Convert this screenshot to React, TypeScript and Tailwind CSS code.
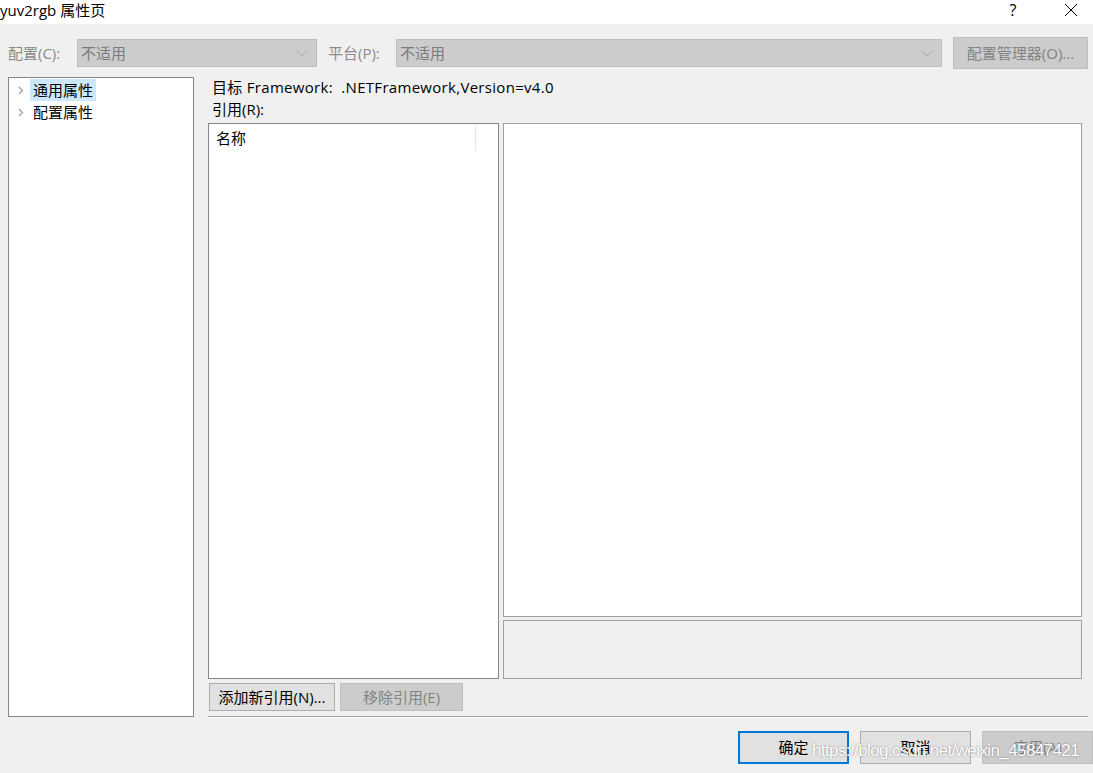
import React from "react";

const font = {
  fontFamily: '"Segoe UI", "Open Sans", "Noto Sans CJK SC", sans-serif',
};

function Chevron() {
  return (
    <svg width="6" height="9" viewBox="0 0 6 9" className="shrink-0">
      <path d="M1 1 L4.5 4.5 L1 8" fill="none" stroke="#a0a0a0" strokeWidth="1.3" />
    </svg>
  );
}

function ComboArrow() {
  return (
    <svg width="12" height="7" viewBox="0 0 12 7">
      <path d="M1 1 L6 6 L11 1" fill="none" stroke="#a8a8a8" strokeWidth="1" />
    </svg>
  );
}

export default function App() {
  return (
    <div
      className="relative w-[1093px] h-[773px] bg-[#f0f0f0] flex flex-col overflow-hidden text-[15px] text-black"
      style={font}
    >
      {/* Title bar */}
      <div className="h-[24px] bg-white flex items-center shrink-0 pb-[4px]">
        <span className="leading-[20px]">yuv2rgb 属性页</span>
        <div className="ml-auto flex items-center">
          <span className="w-[14px] text-center text-[16px] leading-[20px]">?</span>
          <svg width="14" height="14" viewBox="0 0 14 14" className="ml-[44px] mr-[15px]">
            <path d="M1 1 L13 13 M13 1 L1 13" stroke="#000" strokeWidth="1" />
          </svg>
        </div>
      </div>

      {/* Config row */}
      <div className="flex items-center h-[32px] mt-[13px] pl-[8px] shrink-0">
        <span className="w-[69px] text-[#8a8a8a]">配置(C):</span>
        <div className="w-[240px] h-[28px] bg-[#cccccc] border border-[#bfbfbf] flex items-center pl-[3px] pr-[8px] text-[#7a7a7a]">
          <span>不适用</span>
          <span className="ml-auto">
            <ComboArrow />
          </span>
        </div>
        <span className="ml-[11px] w-[68px] text-[#8a8a8a]">平台(P):</span>
        <div className="w-[546px] h-[28px] bg-[#cccccc] border border-[#bfbfbf] flex items-center pl-[3px] pr-[8px] text-[#7a7a7a]">
          <span>不适用</span>
          <span className="ml-auto">
            <ComboArrow />
          </span>
        </div>
        <button className="ml-[11px] w-[135px] h-[32px] bg-[#cccccc] border border-[#bfbfbf] text-[#838383]">
          配置管理器(O)...
        </button>
      </div>

      {/* Main */}
      <div className="flex mt-[8px] pl-[8px] shrink-0">
        {/* Tree */}
        <div className="w-[186px] h-[640px] bg-white border border-[#828790] pt-[1px] flex flex-col">
          <div className="flex items-center h-[22px]">
            <span className="w-[21px] flex justify-end pr-[6px]">
              <Chevron />
            </span>
            <span className="bg-[#cce8ff] h-[22px] px-[3px] flex items-center">通用属性</span>
          </div>
          <div className="flex items-center h-[22px]">
            <span className="w-[21px] flex justify-end pr-[6px]">
              <Chevron />
            </span>
            <span className="h-[22px] px-[3px] flex items-center">配置属性</span>
          </div>
        </div>

        {/* Right side */}
        <div className="ml-[14px] w-[880px] flex flex-col">
          <div className="h-[22px] flex items-center mt-[-1px] pl-[4px] tracking-[0.3px]">
            目标 Framework:&nbsp;&nbsp;.NETFramework,Version=v4.0
          </div>
          <div className="h-[22px] flex items-center pl-[4px]">引用(R):</div>
          <div className="flex gap-[4px] mt-[3px]">
            <div className="w-[291px] h-[556px] bg-white border border-[#828790] p-[1px]">
              <div className="flex h-[26px]">
                <div className="w-[266px] border-r border-[#e5e5e5] flex items-center pl-[6px]">名称</div>
              </div>
            </div>
            <div className="w-[579px] flex flex-col gap-[3px]">
              <div className="h-[494px] bg-white border border-[#a0a0a0]" />
              <div className="h-[59px] border border-[#a0a0a0]" />
            </div>
          </div>
          <div className="flex gap-[5px] mt-[4px] pl-[1px]">
            <button className="w-[126px] h-[28px] bg-[#e1e1e1] border border-[#adadad] flex items-center justify-center">
              添加新引用(N)...
            </button>
            <button className="w-[123px] h-[28px] bg-[#cccccc] border border-[#bfbfbf] text-[#838383] flex items-center justify-center">
              移除引用(E)
            </button>
          </div>
          <div className="mt-[5px] h-[2px] border-t border-[#a0a0a0] border-b border-b-white" />
        </div>
      </div>

      {/* Bottom buttons */}
      <div className="flex mt-[13px] pl-[738px] gap-[11px]">
        <button className="w-[111px] h-[33px] bg-[#e1e1e1] border-2 border-[#0078d7] flex items-center justify-center">
          确定
        </button>
        <button className="w-[111px] h-[33px] bg-[#e1e1e1] border border-[#adadad] flex items-center justify-center">
          取消
        </button>
        <button className="w-[111px] h-[33px] bg-[#cccccc] border border-[#bfbfbf] text-[#838383] flex items-center justify-center">
          应用(A)
        </button>
      </div>

      {/* Watermark */}
      <div
        className="absolute left-[812px] top-[740px] text-[17px] leading-[22px] text-white tracking-[-0.6px]"
        style={{
          fontFamily: '"Liberation Sans", Arial, sans-serif',
          textShadow: "0 0 2px rgba(0,0,0,0.45)",
        }}
      >
        https://blog.csdn.net/weixin_45847421
      </div>
    </div>
  );
}
